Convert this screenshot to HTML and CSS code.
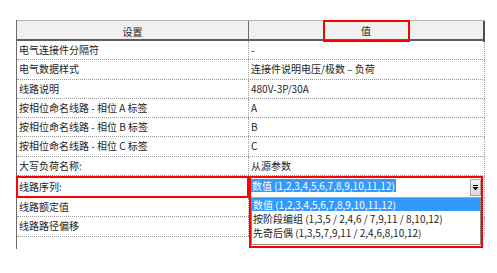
FILE: index.html
```html
<!DOCTYPE html>
<html lang="zh-CN">
<head>
<meta charset="utf-8">
<title>设置</title>
<link rel="stylesheet" href="styles.css">
</head>
<body>
<div class="table">
  <div class="head">
    <div class="hcell hleft">设置</div>
    <div class="hcell hright"><span class="hl-box">值</span></div>
  </div>
  <div class="row"><div class="c1">电气连接件分隔符</div><div class="c2">-</div></div>
  <div class="row"><div class="c1">电气数据样式</div><div class="c2">连接件说明电压/极数 – 负荷</div></div>
  <div class="row"><div class="c1">线路说明</div><div class="c2">480V-3P/30A</div></div>
  <div class="row"><div class="c1">按相位命名线路 - 相位 A 标签</div><div class="c2">A</div></div>
  <div class="row"><div class="c1">按相位命名线路 - 相位 B 标签</div><div class="c2">B</div></div>
  <div class="row"><div class="c1">按相位命名线路 - 相位 C 标签</div><div class="c2">C</div></div>
  <div class="row"><div class="c1">大写负荷名称:</div><div class="c2">从源参数</div></div>
  <div class="row row-sel">
    <div class="c1 red">线路序列:</div>
    <div class="c2 combo">
      <div class="select">
        <span class="sel-value">数值 (1,2,3,4,5,6,7,8,9,10,11,12)</span>
        <span class="arrow"><svg width="11" height="17" viewBox="0 0 11 17"><rect x="3" y="6" width="5" height="1" fill="#000"/><path d="M2.5 8h6l-3 3.5z" fill="#000"/></svg></span>
      </div>
      <div class="popup">
        <div class="opt on">数值 (1,2,3,4,5,6,7,8,9,10,11,12)</div>
        <div class="opt">按阶段编组 (1,3,5 / 2,4,6 / 7,9,11 / 8,10,12)</div>
        <div class="opt">先奇后偶 (1,3,5,7,9,11 / 2,4,6,8,10,12)</div>
      </div>
      <div class="frame"></div>
    </div>
  </div>
  <div class="row"><div class="c1">线路额定值</div><div class="c2"></div></div>
  <div class="row"><div class="c1">线路路径偏移</div><div class="c2"></div></div>
  <div class="row last"><div class="c1"></div><div class="c2"></div></div>
</div>
</body>
</html>
```
FILE: styles.css
```css
html, body {
  margin: 0;
  padding: 0;
  background: #fff;
}
.table {
  margin: 20px 0 0 16px;
  width: 468px;
  border-left: 1px solid #6a6a6a;
  font-family: "Noto Sans CJK SC", "Noto Sans", sans-serif;
  font-size: 10px;
  color: #1e1e1e;
}
.head {
  display: grid;
  grid-template-columns: 232px 1fr;
  height: 21px;
  box-sizing: border-box;
  background: #f0f0f0;
  border-top: 1px solid #b4b4b4;
  border-bottom: 2px solid #5e5e5e;
}
.hcell {
  display: flex;
  align-items: center;
  justify-content: center;
  line-height: 18px;
}
.hleft {
  border-right: 1px solid #6a6a6a;
}
.hright {
  border-right: 2px solid #505050;
}
.hl-box {
  display: flex;
  align-items: center;
  justify-content: center;
  width: 83px;
  height: 18px;
  margin-top: -1px;
  border: 2px solid #f00;
}
.row {
  display: grid;
  grid-template-columns: 232px 1fr;
  height: 19.3px;
  box-sizing: border-box;
  border-bottom: 1px dotted #9a9a9a;
  border-right: 1px dotted #9a9a9a;
}
.c1, .c2 {
  padding-left: 2px;
  line-height: 18px;
  white-space: nowrap;
}
.c1 {
  border-right: 1px dotted #9a9a9a;
}
.row-sel {
  height: 22px;
  border-bottom: none;
}
.c1.red {
  box-shadow: inset 0 0 0 2px #f00;
  margin-left: -1px;
  padding-left: 3px;
  line-height: 22px;
  border-right: none;
}
.combo {
  position: relative;
  padding-left: 0;
}
.select {
  display: flex;
  justify-content: space-between;
  padding: 3px 3px 0 2px;
}
.sel-value {
  background: #3399ff;
  color: #fff;
  line-height: 13px;
  height: 13px;
  padding: 0 1px;
}
.arrow {
  display: block;
  width: 11px;
  height: 17px;
  box-sizing: border-box;
  border: 1px solid #a8a8a8;
  background: linear-gradient(#f4f4f4, #d8d8d8);
}
.arrow svg {
  display: block;
  margin: -1px 0 0 -1px;
}
.popup {
  position: absolute;
  top: 21px;
  left: 2px;
  right: 3px;
  height: 48px;
  background: #fff;
  border: 1px solid #8a8a8a;
  border-top-color: #b9a58a;
  box-sizing: border-box;
  z-index: 2;
}
.opt {
  height: 14px;
  line-height: 13px;
  padding-left: 1px;
  white-space: nowrap;
}
.opt.on {
  background: #3399ff;
  color: #fff;
  height: 13px;
  margin-bottom: 1px;
}
.frame {
  position: absolute;
  left: 0;
  top: 0;
  width: 234px;
  height: 72px;
  box-sizing: border-box;
  border: 2px solid #f00;
  z-index: 3;
}
.row.last {
  height: 12px;
  border-bottom: none;
  border-right: none;
}
.row.last .c1 {
  border-right: none;
}
```
